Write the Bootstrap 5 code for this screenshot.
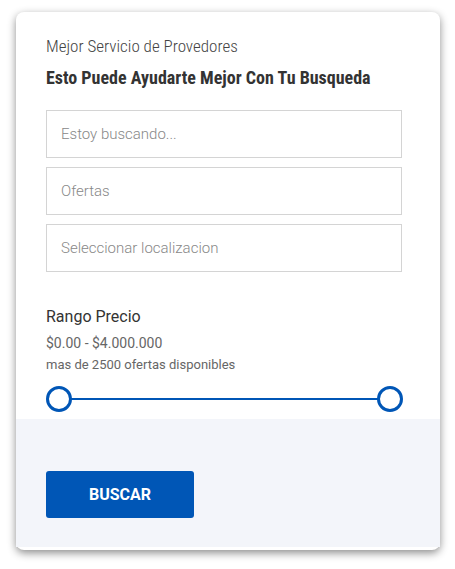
<!DOCTYPE html>
<html lang="es">
<head>
<meta charset="utf-8">
<meta name="viewport" content="width=device-width, initial-scale=1">
<title>Mejor Servicio de Provedores</title>
<link href="https://cdn.jsdelivr.net/npm/bootstrap@5.3.0/dist/css/bootstrap.min.css" rel="stylesheet">
<style>
  body { font-family: Roboto, "Liberation Sans", sans-serif; color: #333; background: #fff; }
  .page { padding: 12px 15px 18px 16px; }
  .search-card { border: 0; border-radius: 8px; box-shadow: 0 3px 9px rgba(0, 0, 0, .45); }
  .search-card .card-body { padding: 22px 38px 7px 30px; }
  .search-card .card-footer { padding: 52px 38px 29px 30px; margin-bottom: 3px; border: 0; border-radius: 0; background: #f3f5fa; }
  .eyebrow { font-family: "Roboto Condensed", "Liberation Sans Narrow", Roboto, sans-serif; font-size: 17px; line-height: 24px; font-weight: 300; color: #444; }
  .headline { font-family: "Roboto Condensed", "Liberation Sans Narrow", Roboto, sans-serif; font-size: 18px; line-height: 40px; font-weight: 700; margin-bottom: 12px; }
  .fields { gap: 9px; margin-bottom: 33px; }
  .fields .form-control { height: 48px; padding: 0 14px; border-color: #d4d4d4; border-radius: 0; font-size: 15px; font-weight: 300; }
  .fields .form-control::placeholder { color: #888; }
  .range-title { font-size: 16px; line-height: 24px; font-weight: 400; }
  .range-value { font-size: 14px; line-height: 28px; color: #666; }
  .range-note { font-size: 13px; line-height: 16px; color: #666; margin-bottom: 13px; }
  .dual-range { height: 26px; margin-right: -1px; background: linear-gradient(#0056b6, #0056b6) center / calc(100% - 26px) 2px no-repeat; }
  .dual-range input { appearance: none; -webkit-appearance: none; height: 26px; background: transparent; pointer-events: none; }
  .dual-range input::-webkit-slider-thumb { -webkit-appearance: none; width: 26px; height: 26px; border: 3px solid #0056b6; border-radius: 50%; background: #fff; pointer-events: auto; }
  .btn-search { width: 148px; height: 47px; padding: 0; border: 0; border-radius: 3px; background: #0056b6; color: #fff; font-size: 16px; font-weight: 700; }
  .btn-search:hover { background: #004a9e; color: #fff; }
</style>
</head>
<body>
<main class="page">
  <form class="card search-card">
    <div class="card-body">
      <p class="eyebrow mb-0">Mejor Servicio de Provedores</p>
      <h1 class="headline">Esto Puede Ayudarte Mejor Con Tu Busqueda</h1>
      <div class="fields d-flex flex-column">
        <input type="text" class="form-control" placeholder="Estoy buscando..." aria-label="Estoy buscando">
        <input type="text" class="form-control" placeholder="Ofertas" aria-label="Ofertas">
        <input type="text" class="form-control" placeholder="Seleccionar localizacion" aria-label="Seleccionar localizacion">
      </div>
      <h2 class="range-title mb-0">Rango Precio</h2>
      <p class="range-value mb-0">$0.00 - $4.000.000</p>
      <p class="range-note">mas de 2500 ofertas disponibles</p>
      <div class="dual-range position-relative">
        <input type="range" class="position-absolute start-0 top-0 w-100 m-0" min="0" max="4000000" value="0" aria-label="Precio minimo">
        <input type="range" class="position-absolute start-0 top-0 w-100 m-0" min="0" max="4000000" value="4000000" aria-label="Precio maximo">
      </div>
    </div>
    <div class="card-footer">
      <button type="submit" class="btn btn-search">BUSCAR</button>
    </div>
  </form>
</main>
<script src="https://cdn.jsdelivr.net/npm/bootstrap@5.3.0/dist/js/bootstrap.bundle.min.js"></script>
</body>
</html>
